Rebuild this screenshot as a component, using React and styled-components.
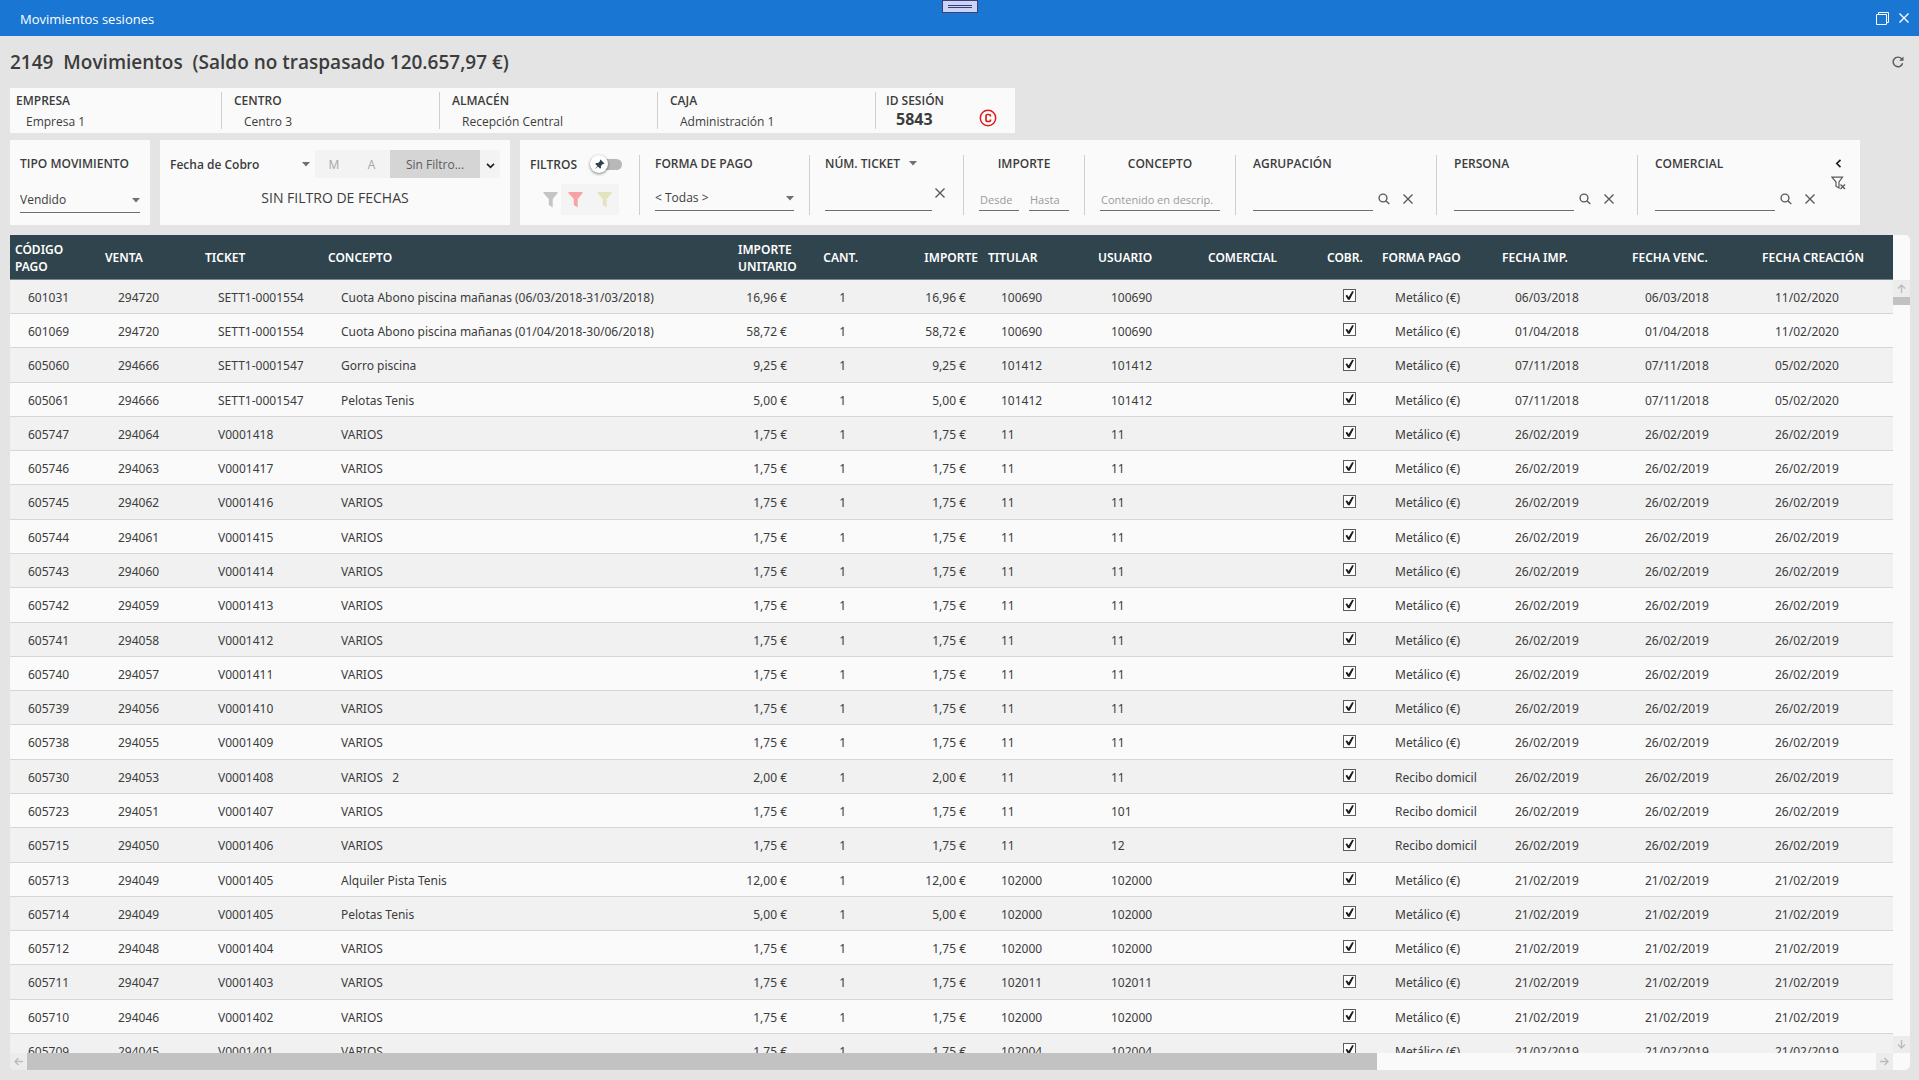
import React, { useState } from "react";
import styled, { createGlobalStyle, css } from "styled-components";

const GlobalStyle = createGlobalStyle`
    *, *::before, *::after {
        box-sizing: border-box;
    }
    body {
        margin: 0;
        background: #e4e4e4;
        color: #3c3c3c;
        font-family: "Open Sans", "Noto Sans", sans-serif;
        font-size: 12px;
        line-height: 16px;
    }
    input, select, button {
        font: inherit;
        color: inherit;
    }
`

const Page = styled.div`
    display: flex;
    flex-direction: column;
    height: 100vh;
    overflow: hidden;
`

const TitleBar = styled.header`
    display: grid;
    grid-template-columns: 1fr auto 1fr;
    flex: none;
    height: 36px;
    background: #1976d2;
    color: #fff;
    font-size: 13px;
`
const WindowTitle = styled.span`
    align-self: center;
    padding: 2px 0 0 20px;
`
const Grip = styled.div`
    display: flex;
    flex-direction: column;
    justify-content: center;
    gap: 1px;
    width: 36px;
    height: 13px;
    padding: 0 5px;
    border: 1px solid #34407c;
    background: #cdd3f2;
    &::before, &::after {
        content: "";
        height: 1px;
        background: #34407c;
    }
`
const WindowButtons = styled.div`
    display: flex;
    align-items: center;
    justify-content: flex-end;
    gap: 10px;
    padding-right: 10px;
`

const IconButton = styled.button`
    display: inline-flex;
    align-items: center;
    justify-content: center;
    flex: none;
    padding: 0;
    border: 0;
    background: none;
    color: ${(p) => p.$color || "#5a5a5a"};
    cursor: pointer;
`

const Heading = styled.div`
    display: flex;
    align-items: center;
    justify-content: space-between;
    flex: none;
    height: 52px;
    padding: 0 15px 0 10px;
    h1 {
        margin: 0;
        font-size: 19px;
        line-height: 26px;
        font-weight: 600;
        white-space: pre;
    }
`

const InfoBar = styled.section`
    display: flex;
    align-self: flex-start;
    flex: none;
    height: 45px;
    margin-left: 10px;
    padding: 4px 0;
    background: #fafafa;
`
const InfoItem = styled.div`
    width: ${(p) => p.$width}px;
    padding-left: ${(p) => p.$indent || 12}px;
    border-left: ${(p) => (p.$first ? 0 : "1px solid #cfcfcf")};
`
const Label = styled.label`
    display: block;
    padding-top: 1px;
    font-weight: 600;
    text-align: ${(p) => p.$align || "left"};
    white-space: nowrap;
`
const InfoValue = styled.div`
    padding: 5px 0 0 10px;
`
const SessionValue = styled.div`
    display: flex;
    justify-content: space-between;
    padding: 0 18px 0 10px;
    font-size: 16px;
    line-height: 20px;
    font-weight: 700;
`

const FilterBar = styled.section`
    display: flex;
    flex: none;
    gap: 10px;
    height: 85px;
    margin: 7px 0 10px 10px;
`
const Panel = styled.div`
    display: flex;
    flex-direction: ${(p) => (p.$column ? "column" : "row")};
    width: ${(p) => (p.$width ? p.$width + "px" : "auto")};
    padding: ${(p) => p.$padding || "15px 0 10px"};
    background: #fafafa;
`
const Group = styled.div`
    display: flex;
    flex-direction: column;
    justify-content: space-between;
    width: ${(p) => p.$width}px;
    padding: 0 ${(p) => p.$gutter || 15}px 4px;
    border-left: 1px solid #cfcfcf;
`
const Line = styled.div`
    display: flex;
    align-items: center;
    gap: ${(p) => p.$gap || 0}px;
`

const underline = css`
    border: 0;
    border-bottom: 1px solid #6e6e6e;
    border-radius: 0;
    background: transparent;
    outline: none;
`
const TextBox = styled.input`
    ${underline}
    width: ${(p) => p.$width}px;
    height: 25px;
    padding: 2px 1px 0;
    &::placeholder {
        color: #9a9a9a;
        font-size: 11px;
        opacity: 1;
    }
`
const SelectBox = styled.div`
    display: grid;
    align-items: center;
    width: ${(p) => (p.$width ? p.$width + "px" : "100%")};
    > * {
        grid-area: 1 / 1;
    }
    select {
        ${(p) => (p.$plain ? "border: 0; background: none; outline: none;" : underline)}
        appearance: none;
        width: 100%;
        height: 25px;
        padding: ${(p) => (p.$plain ? "1px 0 0" : "0")};
        font-weight: ${(p) => (p.$plain ? 600 : 400)};
    }
    svg {
        justify-self: end;
        pointer-events: none;
    }
`
const TypeSelect = styled(SelectBox)`
    margin-top: 16px;
`

const DateRow = styled.div`
    display: flex;
    justify-content: space-between;
    align-items: center;
`
const Segmented = styled.div`
    display: flex;
    height: 28px;
    border-radius: 2px;
    background: #f3f3f3;
    overflow: hidden;
`
const Segment = styled.button`
    width: ${(p) => p.$width}px;
    padding: 2px 0 0;
    border: 0;
    background: ${(p) => (p.$active ? "#d5d5d5" : "transparent")};
    color: ${(p) => (p.$active ? "#5c5c5c" : "#a6a6a6")};
    cursor: pointer;
    svg {
        display: block;
        margin: 0 auto;
    }
`
const DateSummary = styled.div`
    padding-top: 10px;
    font-size: 14px;
    line-height: 20px;
    text-align: center;
`

const FunnelGroup = styled.div`
    display: flex;
    flex-direction: column;
    justify-content: space-between;
    width: 119px;
    padding-left: 10px;
`
const FunnelLine = styled.div`
    display: flex;
    align-items: center;
    gap: 3px;
    padding-left: 13px;
`
const FunnelPair = styled.div`
    display: flex;
    align-items: center;
    justify-content: space-around;
    width: 58px;
    height: 31px;
    background: #f4f4f4;
`
const Toggle = styled.label`
    display: flex;
    align-items: center;
    width: 32px;
    height: 18px;
    cursor: pointer;
    input {
        appearance: none;
        width: 0;
        margin: 0;
    }
`
const Knob = styled.span`
    display: flex;
    align-items: center;
    justify-content: center;
    z-index: 1;
    width: 18px;
    height: 18px;
    border-radius: 50%;
    background: #fff;
    box-shadow: 0 1px 3px rgba(0, 0, 0, 0.5);
`
const Track = styled.span`
    width: 22px;
    height: 11px;
    margin-left: -8px;
    border-radius: 0 6px 6px 0;
    background: #b8b8b8;
`
const ClearTicket = styled(IconButton)`
    align-self: flex-start;
    width: 16px;
    height: 14px;
`
const LookupButtons = styled(Line)`
    gap: 13px;
    padding-left: 5px;
`
const Actions = styled.div`
    display: flex;
    flex-direction: column;
    align-items: center;
    gap: 8px;
    width: 38px;
    padding: 4px 6px 0 0;
    margin-left: -16px;
`

const GridFrame = styled.main`
    display: grid;
    grid-template-columns: 1fr 17px;
    grid-template-rows: 1fr 17px;
    flex: 1;
    min-height: 0;
    margin: 0 9px 10px 10px;
    border-radius: 0 5px 5px 5px;
    background: #fafafa;
    overflow: hidden;
`
const Viewport = styled.div`
    overflow: hidden;
`
const Table = styled.table`
    width: 100%;
    border-collapse: separate;
    border-spacing: 0;
    table-layout: fixed;
    font-family: "Noto Sans", "Open Sans", sans-serif;
`
const Th = styled.th`
    height: 45px;
    padding: 1px 5px 0;
    border-bottom: 1px solid #78868d;
    background: #30444e;
    color: #fff;
    font-weight: 600;
    line-height: 17px;
    text-align: ${(p) => p.$align || "left"};
`
const Row = styled.tr`
    height: 34px;
    background: #fafafa;
    &:nth-child(odd) {
        background: #f1f1f1;
    }
    &:nth-child(7n), &:nth-child(7n + 3) {
        height: 35px;
    }
`
const Td = styled.td`
    padding: ${(p) => (p.$align ? "0 17px 0 5px" : "0 18px")};
    border-bottom: 1px solid #d6d6d6;
    text-align: ${(p) => p.$align || "left"};
    white-space: pre;
    > span {
        display: block;
        padding-top: 2px;
    }
`
const CheckBox = styled.input`
    appearance: none;
    display: block;
    width: 13px;
    height: 13px;
    margin: 0 auto 2px;
    border: 1px solid #5c5c5c;
    background: #fff;
    &:checked::before {
        content: "";
        display: block;
        width: 11px;
        height: 11px;
        background: #1c1c1c;
        clip-path: polygon(14% 52%, 28% 44%, 42% 64%, 74% 12%, 90% 14%, 52% 88%, 36% 88%);
    }
`

const VScroll = styled.div`
    display: flex;
    flex-direction: column;
    padding-top: 45px;
`
const HScroll = styled.div`
    display: flex;
`
const ScrollButton = styled.button`
    display: flex;
    align-items: center;
    justify-content: center;
    flex: none;
    width: 17px;
    height: 17px;
    padding: 0;
    border: 0;
    background: #ececec;
    color: #bcbcbc;
`
const ScrollTrack = styled.div`
    flex: 1;
`
const VThumb = styled.div`
    height: 8px;
    background: #c2c2c2;
`
const HThumb = styled.div`
    width: 73%;
    height: 100%;
    background: #c2c2c2;
`

const Caret = () => (
    <svg width="8" height="5" viewBox="0 0 8 5"><path d="M0 0h8L4 4.6z" fill="#707070" /></svg>
)
const Cross = () => (
    <svg width="10" height="10" viewBox="0 0 10 10" fill="none" stroke="currentColor" strokeWidth="1.4">
        <path d="M.5.5l9 9M9.5.5l-9 9" />
    </svg>
)
const Magnifier = () => (
    <svg width="12" height="12" viewBox="0 0 12 12" fill="none" stroke="currentColor" strokeWidth="1.4">
        <circle cx="5" cy="5" r="3.9" />
        <path d="M7.8 7.8l3.5 3.2" />
    </svg>
)
const Funnel = ({ color }) => (
    <svg width="15" height="17" viewBox="0 0 15 17">
        <path d="M.5 1h14v1.200L9.700 8v8.500L5.800 14V8L.5 2.200z" fill={color} />
    </svg>
)
const ClearFunnel = () => (
    <svg width="15" height="14" viewBox="0 0 15 14" fill="none" stroke="currentColor" strokeWidth="1.2">
        <path d="M8 12L5 10.200V6L1 1.200h10.500L8 6z" />
        <path d="M9.500 8.500l4.500 4.500M14 8.500L9.500 13" strokeWidth="1.4" />
    </svg>
)
const Pin = () => (
    <svg width="11" height="11" viewBox="0 0 11 11">
        <path d="M6.500.5l4 4-1 .6-.7-.1L6.900 7l.1 1.800-.9.9L4 7.600.6 10.400 3.400 7 1.300 4.900l.9-.9L4 4.100 6 2.200 5.900 1.500z" fill="#30444e" />
    </svg>
)
const Chevron = ({ left }) => (
    <svg width="9" height="9" viewBox="0 0 9 9" fill="none" stroke="#222" strokeWidth="1.7">
        <path d={left ? "M6.500.8L2.800 4.500l3.700 3.700" : "M1 2.800L4.500 6.300 8 2.800"} />
    </svg>
)
const Copyright = () => (
    <svg width="18" height="18" viewBox="0 0 18 18" fill="none" stroke="#dd1c1c">
        <circle cx="9" cy="9" r="7.7" strokeWidth="1.5" />
        <path d="M11.500 7.400V7a1.500 1.500 0 0 0-1.500-1.500H8.500A1.500 1.500 0 0 0 7 7v4a1.500 1.500 0 0 0 1.500 1.500H10a1.500 1.500 0 0 0 1.500-1.500v-.4" strokeWidth="1.7" />
    </svg>
)
const Refresh = () => (
    <svg width="12" height="12" viewBox="0 0 12 12" fill="none" stroke="currentColor" strokeWidth="1.4">
        <path d="M10.600 7.200A4.800 4.800 0 1 1 9.600 2.800" />
        <path d="M11.500.5v4.300H7.200z" fill="currentColor" stroke="none" />
    </svg>
)
const Restore = () => (
    <svg width="13" height="13" viewBox="0 0 13 13" fill="none" stroke="currentColor">
        <path d="M.5 2.500h10v10H.5zM2.500 2.500v-2h10v10h-2" />
    </svg>
)
const Arrow = ({ turn }) => (
    <svg width="9" height="9" viewBox="0 0 9 9" fill="none" stroke="currentColor" strokeWidth="1.4">
        <path d="M4.500 9V1M1 4.500L4.500 1 8 4.500" transform={`rotate(${turn} 4.5 4.5)`} />
    </svg>
)

const columns = [
    { title: "CÓDIGO PAGO", width: 90 },
    { title: "VENTA", width: 100 },
    { title: "TICKET", width: 123 },
    { title: "CONCEPTO", width: 410 },
    { title: "IMPORTE UNITARIO", width: 71, align: "right", head: "left" },
    { title: "CANT.", width: 59, align: "right" },
    { title: "IMPORTE", width: 120, align: "right" },
    { title: "TITULAR", width: 110 },
    { title: "USUARIO", width: 110 },
    { title: "COMERCIAL", width: 119 },
    { title: "COBR.", width: 55 },
    { title: "FORMA PAGO", width: 120 },
    { title: "FECHA IMP.", width: 130 },
    { title: "FECHA VENC.", width: 130 },
    { title: "FECHA CREACIÓN" },
];

// código, venta, ticket, concepto, importe, titular, usuario, forma de pago, fechas
const CASH = "Metálico (€)";
const BANK = "Recibo domicil";
const misc = (code, sale, ticket, date, holder = "11", user = holder, pay = CASH) =>
    [code, sale, ticket, "VARIOS", "1,75 €", holder, user, pay, date, date, date];

const rows = [
    ["601031", "294720", "SETT1-0001554", "Cuota Abono piscina mañanas (06/03/2018-31/03/2018)", "16,96 €", "100690", "100690", CASH, "06/03/2018", "06/03/2018", "11/02/2020"],
    ["601069", "294720", "SETT1-0001554", "Cuota Abono piscina mañanas (01/04/2018-30/06/2018)", "58,72 €", "100690", "100690", CASH, "01/04/2018", "01/04/2018", "11/02/2020"],
    ["605060", "294666", "SETT1-0001547", "Gorro piscina", "9,25 €", "101412", "101412", CASH, "07/11/2018", "07/11/2018", "05/02/2020"],
    ["605061", "294666", "SETT1-0001547", "Pelotas Tenis", "5,00 €", "101412", "101412", CASH, "07/11/2018", "07/11/2018", "05/02/2020"],
    misc("605747", "294064", "V0001418", "26/02/2019"),
    misc("605746", "294063", "V0001417", "26/02/2019"),
    misc("605745", "294062", "V0001416", "26/02/2019"),
    misc("605744", "294061", "V0001415", "26/02/2019"),
    misc("605743", "294060", "V0001414", "26/02/2019"),
    misc("605742", "294059", "V0001413", "26/02/2019"),
    misc("605741", "294058", "V0001412", "26/02/2019"),
    misc("605740", "294057", "V0001411", "26/02/2019"),
    misc("605739", "294056", "V0001410", "26/02/2019"),
    misc("605738", "294055", "V0001409", "26/02/2019"),
    ["605730", "294053", "V0001408", "VARIOS   2", "2,00 €", "11", "11", BANK, "26/02/2019", "26/02/2019", "26/02/2019"],
    misc("605723", "294051", "V0001407", "26/02/2019", "11", "101", BANK),
    misc("605715", "294050", "V0001406", "26/02/2019", "11", "12", BANK),
    ["605713", "294049", "V0001405", "Alquiler Pista Tenis", "12,00 €", "102000", "102000", CASH, "21/02/2019", "21/02/2019", "21/02/2019"],
    ["605714", "294049", "V0001405", "Pelotas Tenis", "5,00 €", "102000", "102000", CASH, "21/02/2019", "21/02/2019", "21/02/2019"],
    misc("605712", "294048", "V0001404", "21/02/2019", "102000"),
    misc("605711", "294047", "V0001403", "21/02/2019", "102011"),
    misc("605710", "294046", "V0001402", "21/02/2019", "102000"),
    misc("605709", "294045", "V0001401", "21/02/2019", "102004"),
];

const TableRow = ({ data }) => {
    const [code, sale, ticket, concept, amount, holder, user, pay, ...dates] = data;
    const cells = [code, sale, ticket, concept, amount, "1", amount, holder, user, "", null, pay, ...dates];

    return (
        <Row>
            {cells.map((value, i) => (
                <Td key={i} $align={columns[i].align}>
                    {value === null
                        ? <CheckBox type="checkbox" aria-label={`Cobrado ${code}`} defaultChecked />
                        : <span>{value}</span>}
                </Td>
            ))}
        </Row>
    );
}

const Lookup = ({ id, title }) => (
    <Group $width={201} $gutter={17}>
        <Label htmlFor={id}>{title}</Label>
        <Line>
            <TextBox id={id} $width={120} />
            <LookupButtons>
                <IconButton aria-label={`Buscar ${title}`}><Magnifier /></IconButton>
                <IconButton aria-label={`Borrar ${title}`}><Cross /></IconButton>
            </LookupButtons>
        </Line>
    </Group>
)

const App = () => {
    const [pinned, setPinned] = useState(false);

    return (
        <>
            <GlobalStyle />
            <Page>
                <TitleBar>
                    <WindowTitle>Movimientos sesiones</WindowTitle>
                    <Grip />
                    <WindowButtons>
                        <IconButton $color="#fff" aria-label="Restaurar"><Restore /></IconButton>
                        <IconButton $color="#fff" aria-label="Cerrar"><Cross /></IconButton>
                    </WindowButtons>
                </TitleBar>

                <Heading>
                    <h1>{"2149  Movimientos  (Saldo no traspasado 120.657,97 €)"}</h1>
                    <IconButton aria-label="Actualizar"><Refresh /></IconButton>
                </Heading>

                <InfoBar>
                    <InfoItem $first $width={211} $indent={6}>
                        <Label as="div">EMPRESA</Label>
                        <InfoValue>Empresa 1</InfoValue>
                    </InfoItem>
                    <InfoItem $width={218}>
                        <Label as="div">CENTRO</Label>
                        <InfoValue>Centro 3</InfoValue>
                    </InfoItem>
                    <InfoItem $width={218}>
                        <Label as="div">ALMACÉN</Label>
                        <InfoValue>Recepción Central</InfoValue>
                    </InfoItem>
                    <InfoItem $width={218}>
                        <Label as="div">CAJA</Label>
                        <InfoValue>Administración 1</InfoValue>
                    </InfoItem>
                    <InfoItem $width={140} $indent={10}>
                        <Label as="div">ID SESIÓN</Label>
                        <SessionValue>5843 <Copyright /></SessionValue>
                    </InfoItem>
                </InfoBar>

                <FilterBar>
                    <Panel $column $width={140} $padding="15px 10px 10px">
                        <Label htmlFor="tipo">TIPO MOVIMIENTO</Label>
                        <TypeSelect>
                            <select id="tipo"><option>Vendido</option></select>
                            <Caret />
                        </TypeSelect>
                    </Panel>

                    <Panel $column $width={350} $padding="10px">
                        <DateRow>
                            <SelectBox $plain $width={140}>
                                <select aria-label="Tipo de fecha"><option>Fecha de Cobro</option></select>
                                <Caret />
                            </SelectBox>
                            <Segmented>
                                <Segment $width={38}>M</Segment>
                                <Segment $width={37}>A</Segment>
                                <Segment $width={90} $active>Sin Filtro...</Segment>
                                <Segment $width={20} aria-label="Más filtros"><Chevron /></Segment>
                            </Segmented>
                        </DateRow>
                        <DateSummary>SIN FILTRO DE FECHAS</DateSummary>
                    </Panel>

                    <Panel>
                        <FunnelGroup>
                            <Line $gap={13}>
                                <Label as="span">FILTROS</Label>
                                <Toggle>
                                    <input
                                        type="checkbox"
                                        aria-label="Fijar filtros"
                                        checked={pinned}
                                        onChange={() => setPinned(!pinned)}
                                    />
                                    <Knob><Pin /></Knob>
                                    <Track />
                                </Toggle>
                            </Line>
                            <FunnelLine>
                                <IconButton aria-label="Filtro gris"><Funnel color="#c4c4c4" /></IconButton>
                                <FunnelPair>
                                    <IconButton aria-label="Filtro rojo"><Funnel color="#f7a3a3" /></IconButton>
                                    <IconButton aria-label="Filtro amarillo"><Funnel color="#e3e3bd" /></IconButton>
                                </FunnelPair>
                            </FunnelLine>
                        </FunnelGroup>

                        <Group $width={170}>
                            <Label htmlFor="forma">FORMA DE PAGO</Label>
                            <SelectBox>
                                <select id="forma"><option>{"< Todas >"}</option></select>
                                <Caret />
                            </SelectBox>
                        </Group>

                        <Group $width={154}>
                            <Line $gap={9}>
                                <Label htmlFor="ticket">NÚM. TICKET</Label>
                                <Caret />
                            </Line>
                            <Line>
                                <TextBox id="ticket" $width={107} />
                                <ClearTicket aria-label="Borrar ticket"><Cross /></ClearTicket>
                            </Line>
                        </Group>

                        <Group $width={121}>
                            <Label as="div" $align="center">IMPORTE</Label>
                            <Line $gap={10}>
                                <TextBox $width={40} placeholder="Desde" aria-label="Importe desde" />
                                <TextBox $width={40} placeholder="Hasta" aria-label="Importe hasta" />
                            </Line>
                        </Group>

                        <Group $width={151}>
                            <Label htmlFor="concepto" $align="center">CONCEPTO</Label>
                            <TextBox id="concepto" $width={120} placeholder="Contenido en descrip." />
                        </Group>

                        <Lookup id="agrupacion" title="AGRUPACIÓN" />
                        <Lookup id="persona" title="PERSONA" />
                        <Lookup id="comercial" title="COMERCIAL" />

                        <Actions>
                            <IconButton aria-label="Contraer filtros"><Chevron left /></IconButton>
                            <IconButton aria-label="Quitar filtros"><ClearFunnel /></IconButton>
                        </Actions>
                    </Panel>
                </FilterBar>

                <GridFrame>
                    <Viewport>
                        <Table>
                            <colgroup>
                                {columns.map((c) => <col key={c.title} width={c.width} />)}
                            </colgroup>
                            <thead>
                                <tr>
                                    {columns.map((c) => (
                                        <Th key={c.title} $align={c.head || c.align}>{c.title}</Th>
                                    ))}
                                </tr>
                            </thead>
                            <tbody>
                                {rows.map((row) => <TableRow key={row[0]} data={row} />)}
                            </tbody>
                        </Table>
                    </Viewport>
                    <VScroll>
                        <ScrollButton aria-label="Subir"><Arrow turn={0} /></ScrollButton>
                        <ScrollTrack><VThumb /></ScrollTrack>
                        <ScrollButton aria-label="Bajar"><Arrow turn={180} /></ScrollButton>
                    </VScroll>
                    <HScroll>
                        <ScrollButton aria-label="Izquierda"><Arrow turn={270} /></ScrollButton>
                        <ScrollTrack><HThumb /></ScrollTrack>
                        <ScrollButton aria-label="Derecha"><Arrow turn={90} /></ScrollButton>
                    </HScroll>
                </GridFrame>
            </Page>
        </>
    );
}

export default App;
